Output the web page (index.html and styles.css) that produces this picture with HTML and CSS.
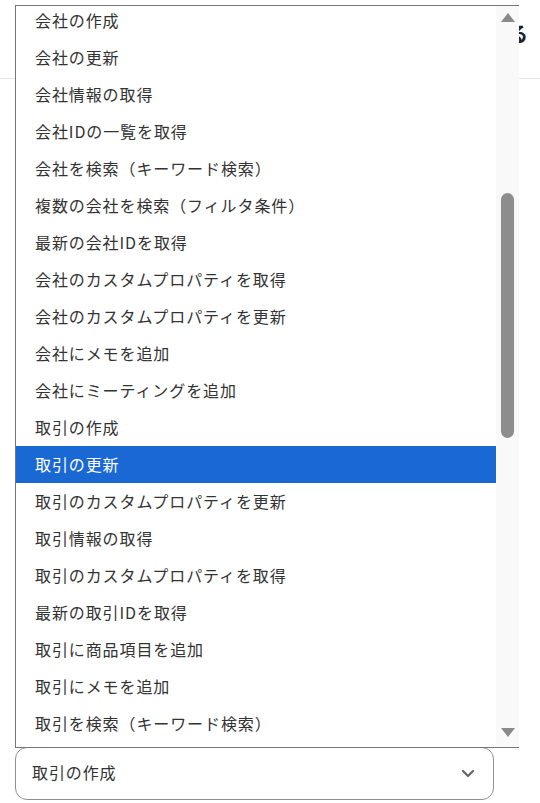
FILE: index.html
```html
<!DOCTYPE html>
<html lang="ja">
<head>
  <meta charset="UTF-8">
  <meta name="viewport" content="width=device-width, initial-scale=1.0">
  <title>アクションの選択</title>
  <link rel="stylesheet" href="styles.css">
</head>
<body>
  <header class="top-bar">
    <h2 class="title">アクションを設定する</h2>
  </header>

  <main class="form">
    <div class="select-box">
      <span class="select-value">取引の作成</span>
      <svg class="chevron" width="14" height="9" viewBox="0 0 14 9">
        <path d="M2 2 L7 7 L12 2" fill="none" stroke="#666" stroke-width="2.2" stroke-linecap="round" stroke-linejoin="round"/>
      </svg>
    </div>
  </main>

  <!-- open dropdown list -->
  <div class="listbox">
    <ul class="options">
      <li>会社の作成</li>
      <li>会社の更新</li>
      <li>会社情報の取得</li>
      <li>会社IDの一覧を取得</li>
      <li>会社を検索（キーワード検索）</li>
      <li>複数の会社を検索（フィルタ条件）</li>
      <li>最新の会社IDを取得</li>
      <li>会社のカスタムプロパティを取得</li>
      <li>会社のカスタムプロパティを更新</li>
      <li>会社にメモを追加</li>
      <li>会社にミーティングを追加</li>
      <li>取引の作成</li>
      <li class="selected">取引の更新</li>
      <li>取引のカスタムプロパティを更新</li>
      <li>取引情報の取得</li>
      <li>取引のカスタムプロパティを取得</li>
      <li>最新の取引IDを取得</li>
      <li>取引に商品項目を追加</li>
      <li>取引にメモを追加</li>
      <li>取引を検索（キーワード検索）</li>
    </ul>
    <div class="scrollbar">
      <div class="arrow up"></div>
      <div class="track">
        <div class="thumb"></div>
      </div>
      <div class="arrow down"></div>
    </div>
  </div>
</body>
</html>
```

FILE: styles.css
```css
body {
  margin: 0;
  font-family: "Noto Sans CJK JP", "Noto Sans", sans-serif;
  color: #333;
  background: #fff;
}

.top-bar {
  height: 78px;
  border-bottom: 1px solid #e6e6e6;
  display: flex;
  align-items: center;
  justify-content: flex-end;
  padding-right: 12px;
}
.title {
  margin: 0 0 12px;
  font-size: 20px;
  font-weight: bold;
  color: #222;
}

.form {
  height: calc(100vh - 79px);
  box-sizing: border-box;
  display: flex;
  flex-direction: column;
  justify-content: flex-end;
  padding: 0 0 3px 15px;
}
.select-box {
  width: 479px;
  height: 53px;
  box-sizing: border-box;
  border: 1px solid #8f8f8f;
  border-radius: 12px;
  display: flex;
  align-items: center;
  justify-content: space-between;
  padding: 0 18px 0 16px;
  font-size: 16px;
  letter-spacing: 0.9px;
}
.select-value {
  line-height: 1;
  margin-bottom: 4px;
}
.chevron {
  display: block;
}

.listbox {
  position: absolute;
  left: 15px;
  top: 5px;
  width: 504px;
  height: 743px;
  box-sizing: border-box;
  background: #fff;
  border: 1px solid #767676;
  border-right: none;
  display: flex;
  overflow: hidden;
}
.options {
  flex: 1;
  list-style: none;
  margin: -4px 0 0;
  padding: 0;
  font-size: 16px;
  letter-spacing: 0.9px;
}
.options li {
  height: 37px;
  line-height: 37px;
  padding-left: 19px;
  white-space: nowrap;
}
.options li.selected {
  background: #1a68d4;
  color: #fff;
}

.scrollbar {
  width: 23px;
  background: #f9f9f9;
  display: flex;
  flex-direction: column;
}
.arrow {
  height: 22px;
  display: flex;
  justify-content: center;
}
.arrow.up::before,
.arrow.down::before {
  content: "";
  width: 0;
  height: 0;
  border-left: 7px solid transparent;
  border-right: 7px solid transparent;
}
.arrow.up {
  align-items: flex-end;
}
.arrow.up::before {
  border-bottom: 9px solid #8a8a8a;
  margin-bottom: 6px;
}
.arrow.down {
  align-items: flex-start;
}
.arrow.down::before {
  border-top: 9px solid #8a8a8a;
  margin-top: 3px;
}
.track {
  flex: 1;
  display: flex;
  justify-content: center;
}
.thumb {
  width: 13px;
  height: 245px;
  margin-top: 165px;
  border-radius: 7px;
  background: #8d8d8d;
}
```
